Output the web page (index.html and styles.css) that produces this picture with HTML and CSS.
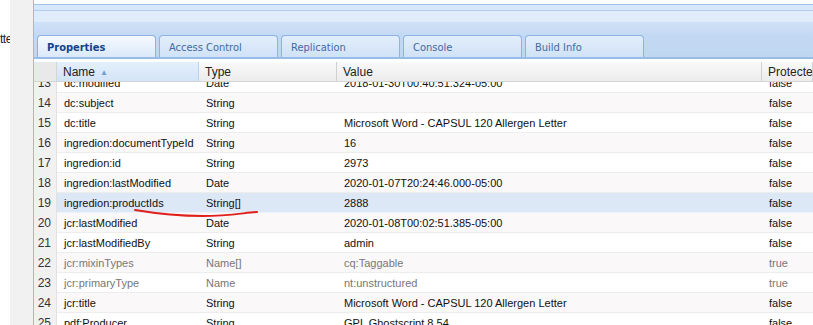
FILE: index.html
```html
<!DOCTYPE html>
<html lang="en">

<head>
    <meta charset="UTF-8">
    <title>CRXDE Properties</title>
    <link rel="stylesheet" href="styles.css">
</head>

<body>
    <div class="side">
        <div class="side-text">tte</div>
        <div class="splitter"></div>
    </div>

    <div class="panel">
        <div class="topbox"></div>
        <div class="band-a"></div>
        <div class="band-b"></div>

        <!-- tab strip -->
        <div class="tabstrip">
            <div class="tab active">Properties</div>
            <div class="tab">Access Control</div>
            <div class="tab">Replication</div>
            <div class="tab">Console</div>
            <div class="tab">Build Info</div>
        </div>

        <div class="grid">
            <div class="row head">
                <div class="num"></div>
                <div class="cell sorted">Name<span class="arrow">&#9650;</span></div>
                <div class="cell">Type</div>
                <div class="cell">Value</div>
                <div class="cell">Protected</div>
            </div>

            <div class="body">
                <div class="row first">
                    <div class="num">13</div>
                    <div class="cell">dc:modified</div>
                    <div class="cell">Date</div>
                    <div class="cell">2018-01-30T00:40:51.324-05:00</div>
                    <div class="cell">false</div>
                </div>
                <div class="row alt">
                    <div class="num">14</div>
                    <div class="cell">dc:subject</div>
                    <div class="cell">String</div>
                    <div class="cell"></div>
                    <div class="cell">false</div>
                </div>
                <div class="row">
                    <div class="num">15</div>
                    <div class="cell">dc:title</div>
                    <div class="cell">String</div>
                    <div class="cell">Microsoft Word - CAPSUL 120 Allergen Letter</div>
                    <div class="cell">false</div>
                </div>
                <div class="row alt">
                    <div class="num">16</div>
                    <div class="cell">ingredion:documentTypeId</div>
                    <div class="cell">String</div>
                    <div class="cell">16</div>
                    <div class="cell">false</div>
                </div>
                <div class="row">
                    <div class="num">17</div>
                    <div class="cell">ingredion:id</div>
                    <div class="cell">String</div>
                    <div class="cell">2973</div>
                    <div class="cell">false</div>
                </div>
                <div class="row alt">
                    <div class="num">18</div>
                    <div class="cell">ingredion:lastModified</div>
                    <div class="cell">Date</div>
                    <div class="cell">2020-01-07T20:24:46.000-05:00</div>
                    <div class="cell">false</div>
                </div>
                <div class="row selected">
                    <div class="num">19</div>
                    <div class="cell">ingredion:productIds</div>
                    <div class="cell">String[]</div>
                    <div class="cell">2888</div>
                    <div class="cell">false</div>
                </div>
                <div class="row alt">
                    <div class="num">20</div>
                    <div class="cell">jcr:lastModified</div>
                    <div class="cell">Date</div>
                    <div class="cell">2020-01-08T00:02:51.385-05:00</div>
                    <div class="cell">false</div>
                </div>
                <div class="row">
                    <div class="num">21</div>
                    <div class="cell">jcr:lastModifiedBy</div>
                    <div class="cell">String</div>
                    <div class="cell">admin</div>
                    <div class="cell">false</div>
                </div>
                <div class="row alt protected">
                    <div class="num">22</div>
                    <div class="cell">jcr:mixinTypes</div>
                    <div class="cell">Name[]</div>
                    <div class="cell">cq:Taggable</div>
                    <div class="cell">true</div>
                </div>
                <div class="row protected">
                    <div class="num">23</div>
                    <div class="cell">jcr:primaryType</div>
                    <div class="cell">Name</div>
                    <div class="cell">nt:unstructured</div>
                    <div class="cell">true</div>
                </div>
                <div class="row alt">
                    <div class="num">24</div>
                    <div class="cell">jcr:title</div>
                    <div class="cell">String</div>
                    <div class="cell">Microsoft Word - CAPSUL 120 Allergen Letter</div>
                    <div class="cell">false</div>
                </div>
                <div class="row">
                    <div class="num">25</div>
                    <div class="cell">pdf:Producer</div>
                    <div class="cell">String</div>
                    <div class="cell">GPL Ghostscript 8.54</div>
                    <div class="cell">false</div>
                </div>
            </div>
        </div>
    </div>

    <!-- hand drawn red underline annotation -->
    <svg class="scribble" width="140" height="16" viewBox="0 0 140 16">
        <path d="M2 3 C 20 6, 40 9, 70 9 C 95 9, 110 6, 124 5" fill="none" stroke="#e0201c" stroke-width="2" stroke-linecap="round" />
    </svg>
</body>

</html>
```

FILE: styles.css
```css
* {
    box-sizing: border-box;
}

body {
    margin: 0;
    width: 813px;
    height: 325px;
    overflow: hidden;
    display: flex;
    background: #fff;
    font-family: 'Liberation Sans', Arial, sans-serif;
    font-size: 11px;
    color: #111;
    position: relative;
}

/* left edge: clipped neighbour panel + splitter */
.side {
    display: flex;
    width: 33px;
    flex: none;
}

.side-text {
    width: 10px;
    overflow: hidden;
    padding-top: 32px;
    font-size: 12px;
    color: #222;
    letter-spacing: -0.5px;
}

.splitter {
    flex: 1;
    background: #f1f1f1;
}

.panel {
    flex: 1;
    display: flex;
    flex-direction: column;
    border-left: 1px solid #99bbe8;
    min-width: 0;
}

.topbox {
    height: 5px;
    background: #fff;
    border-bottom: 1px solid #a3c2ea;
}

.band-a {
    height: 6px;
    background: #d7e6f8;
    border-bottom: 1px solid #b4cdec;
}

.band-b {
    height: 11px;
    background: #e0ecfa;
}

.tabstrip {
    height: 37px;
    display: flex;
    align-items: flex-end;
    gap: 3px;
    padding-left: 3px;
    background: linear-gradient(#cfe1f6, #c3d9f3 40%, #bfd6f1);
    border-bottom: 2px solid #99bbe8;
}

.tab {
    width: 119px;
    height: 22px;
    padding: 5px 0 0 9px;
    border: 1px solid #8db2e3;
    border-bottom: none;
    border-radius: 4px 4px 0 0;
    background: linear-gradient(#e3eefb, #d0e2f7);
    font-family: 'DejaVu Sans Condensed', 'DejaVu Sans', sans-serif;
    font-size: 11px;
    color: #416aa3;
}

.tab.active {
    background: linear-gradient(#f5f9fe, #dbe9fa);
    color: #15428b;
    font-weight: bold;
}

.grid {
    flex: 1;
    display: flex;
    flex-direction: column;
    margin-top: 3px;
    min-height: 0;
}

.row {
    display: grid;
    grid-template-columns: 23px 142px 138px 425px 1fr;
    height: 20px;
    border-bottom: 1px solid #ededed;
    white-space: nowrap;
}

.row.alt {
    background: #faf8f9;
}

.row.selected {
    background: #dde8f7;
    border-bottom-color: #eef3fa;
}

.row.protected .cell {
    color: #777;
}

.cell {
    padding: 1px 0 0 7px;
    overflow: hidden;
    line-height: 19px;
}

.num {
    padding: 1px 5px 0 0;
    line-height: 19px;
    text-align: right;
    background: #f1f1f1;
    border-right: 1px solid #e2e2e2;
    font-size: 12px;
    color: #333;
}

/* column headers */
.row.head {
    background: linear-gradient(#f9f9f9, #ececec);
    border-bottom: 1px solid #d4d4d4;
    font-size: 12px;
    color: #222;
}

.row.head .num {
    background: #e9e9e9;
    border-right: 1px solid #d6d6d6;
}

.row.head .cell {
    padding: 0 0 0 6px;
    border-right: 1px solid #d0d0d0;
    line-height: 20px;
}

.row.head .cell.sorted {
    background: linear-gradient(#e4effb, #d3e4f8);
    border-right-color: #b9d1ee;
}

.arrow {
    margin-left: 5px;
    font-size: 8px;
    color: #6c9fd9;
    vertical-align: 1px;
}

.body {
    flex: 1;
    overflow: hidden;
}

/* list is scrolled a little, row 13 is partly hidden */
.row.first {
    margin-top: -9px;
}

.scribble {
    position: absolute;
    left: 133px;
    top: 207px;
}
```
